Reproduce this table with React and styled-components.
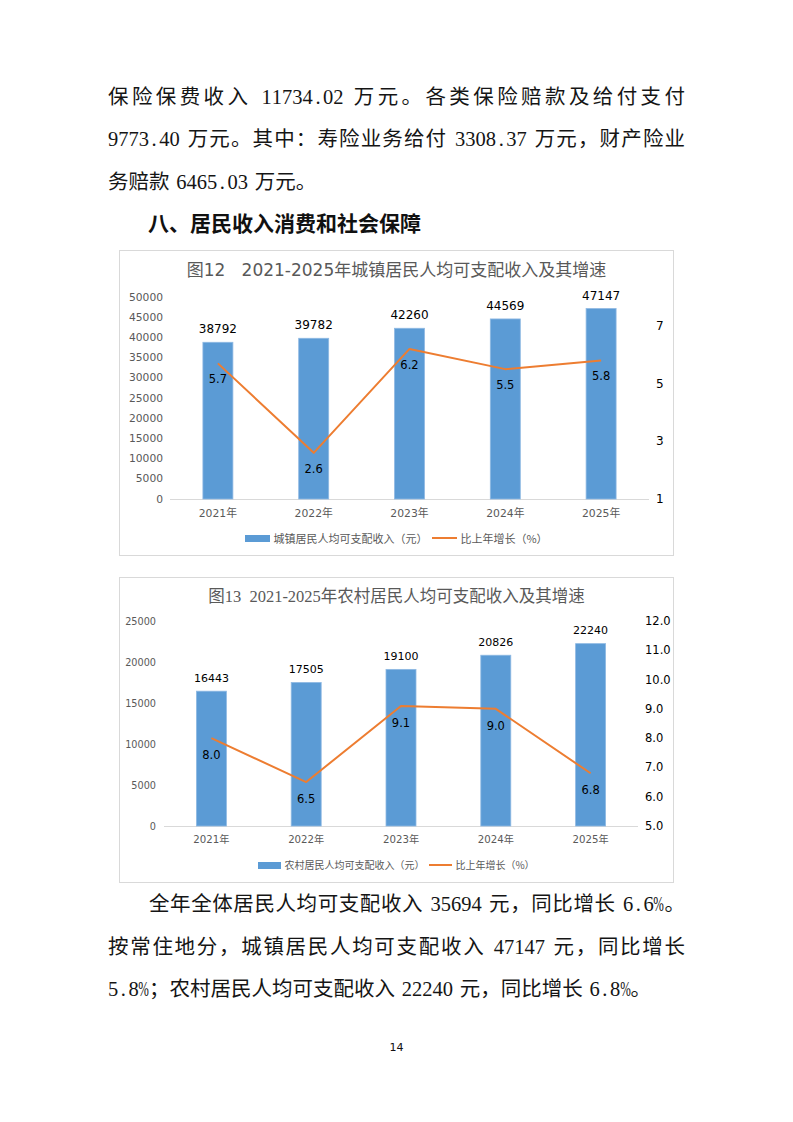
import React from "react";
import styled, { createGlobalStyle } from "styled-components";

const GlobalStyle = createGlobalStyle`
  html, body {
    margin: 0;
    padding: 0;
    background: #fff;
  }
  body {
    font-family: "Liberation Serif", "Noto Sans CJK SC", serif;
    color: #000;
  }
`;

const Page = styled.div`
  width: 793px;
  height: 1122px;
  box-sizing: border-box;
  padding: 75.5px 108px 0;
  overflow: hidden;
`;

const Paragraph = styled.div`
  font-family: "Liberation Serif", "Noto Sans CJK SC", serif;
  font-size: 20.5px;
  line-height: 42.67px;
  word-spacing: 0.08em;
  color: #151515;
`;

const Line = styled.div`
  text-align: ${({ $justify }) => ($justify ? "justify" : "left")};
  text-align-last: ${({ $justify }) => ($justify ? "justify" : "left")};
  text-indent: ${({ $indent }) => ($indent ? "2em" : "0")};
`;

// half-width cell, like the digits of a 仿宋 face
const Half = styled.span`
  display: inline-flex;
  justify-content: center;
  width: 0.5em;
  text-indent: 0;
`;

const Squeeze = styled.span`
  display: inline-block;
  transform: scaleX(0.62);
`;

const Heading = styled.h2`
  margin: 0;
  font-family: "Noto Sans CJK SC", sans-serif;
  font-weight: 700;
  font-size: 21px;
  line-height: 36px;
  text-indent: 40px;
  color: #111;
`;

const ChartBox = styled.div`
  margin: ${({ $gap }) => $gap}px 0 0 11px;
  width: 555px;
  height: 306px;
  box-sizing: border-box;
  border: 1px solid #d9d9d9;
  display: flex;
  flex-direction: column;
`;

const ChartTitle = styled.div`
  height: 34px;
  box-sizing: border-box;
  padding-top: 4px;
  line-height: 30px;
  text-align: center;
  white-space: pre;
  font-size: ${({ $serif }) => ($serif ? 16.5 : 17)}px;
  color: #595959;
  font-family: ${({ $serif }) =>
    $serif
      ? '"Liberation Serif", "Noto Sans CJK SC", serif'
      : '"DejaVu Sans", "Noto Sans CJK SC", sans-serif'};
`;

const PlotSvg = styled.svg`
  display: block;
  width: 553px;
  height: 240px;
  font-family: "DejaVu Sans", "Noto Sans CJK SC", sans-serif;
`;

const Legend = styled.div`
  height: 30px;
  display: flex;
  justify-content: center;
  align-items: flex-start;
  gap: 5px;
  line-height: 26px;
  font-family: "Noto Sans CJK SC", sans-serif;
  font-size: ${({ $size }) => $size}px;
  color: #595959;
`;

const LegendItem = styled.span`
  display: inline-flex;
  align-items: center;
  gap: 3px;
`;

const Swatch = styled.span`
  display: inline-block;
  width: ${({ $w }) => $w}px;
  height: ${({ $line }) => ($line ? 2 : 7)}px;
  background: ${({ $color }) => $color};
`;

const PageNumber = styled.div`
  margin-top: 30px;
  text-align: center;
  font-family: "DejaVu Sans", sans-serif;
  font-size: 11px;
  line-height: 14px;
  color: #111;
`;

const BLUE = "#5b9bd5";
const ORANGE = "#ed7d31";

const urban = {
  title: "图12   2021-2025年城镇居民人均可支配收入及其增速",
  serifTitle: false,
  legendName: "城镇居民人均可支配收入（元）",
  legendSize: 11,
  swatchW: 25,
  data: [
    { year: 2021, value: 38792, pct: 5.7 },
    { year: 2022, value: 39782, pct: 2.6 },
    { year: 2023, value: 42260, pct: 6.2 },
    { year: 2024, value: 44569, pct: 5.5 },
    { year: 2025, value: 47147, pct: 5.8 },
  ],
  left: { max: 50000, step: 5000, x: 43, size: 10.7 },
  right: { min: 1, max: 8, ticks: [1, 3, 5, 7], x: 536, size: 12, digits: 0 },
  axisX0: 50,
  axisX1: 529,
  top: 12,
  base: 214,
  yearY: 228,
  yearSize: 10.8,
  valueSize: 12,
  pctSize: 11.5,
  pctOffset: 16,
};

const rural = {
  title: "图13  2021-2025年农村居民人均可支配收入及其增速",
  serifTitle: true,
  legendName: "农村居民人均可支配收入（元）",
  legendSize: 10,
  swatchW: 23,
  data: [
    { year: 2021, value: 16443, pct: 8.0 },
    { year: 2022, value: 17505, pct: 6.5 },
    { year: 2023, value: 19100, pct: 9.1 },
    { year: 2024, value: 20826, pct: 9.0 },
    { year: 2025, value: 22240, pct: 6.8 },
  ],
  left: { max: 25000, step: 5000, x: 36, size: 9.7 },
  right: { min: 5, max: 12, ticks: [5, 6, 7, 8, 9, 10, 11, 12], x: 525, size: 11.5, digits: 1 },
  axisX0: 44,
  axisX1: 518,
  top: 9,
  base: 214,
  yearY: 227,
  yearSize: 10.2,
  valueSize: 11,
  pctSize: 11.5,
  pctOffset: 17,
};

const Plot = ({ cfg }) => {
  const { data, left, right, axisX0, axisX1, top, base } = cfg;
  const slot = (axisX1 - axisX0) / data.length;
  const cx = (i) => axisX0 + slot * (i + 0.5);
  const yL = (v) => base - (v / left.max) * (base - top);
  const yR = (v) => base - ((v - right.min) / (right.max - right.min)) * (base - top);

  const leftTicks = [];
  for (let v = 0; v <= left.max; v += left.step) leftTicks.push(v);

  const points = data.map((d, i) => `${cx(i)},${yR(d.pct)}`).join(" ");

  return (
    <PlotSvg viewBox="0 0 553 240">
      {leftTicks.map((v) => (
        <text key={v} x={left.x} y={yL(v)} fontSize={left.size} fill="#595959" textAnchor="end" dominantBaseline="central">
          {v}
        </text>
      ))}
      {right.ticks.map((v) => (
        <text key={v} x={right.x} y={yR(v)} fontSize={right.size} fill="#000" dominantBaseline="central">
          {v.toFixed(right.digits)}
        </text>
      ))}
      <line x1={axisX0} x2={axisX1} y1={base + 0.5} y2={base + 0.5} stroke="#d9d9d9" strokeWidth="1" />
      {data.map((d, i) => (
        <g key={d.year}>
          <rect x={cx(i) - 15} y={yL(d.value)} width="30" height={base - yL(d.value)} fill={BLUE} stroke="#8fb9e3" strokeWidth="0.8" />
          <text x={cx(i)} y={yL(d.value) - 13} fontSize={cfg.valueSize} fill="#000" textAnchor="middle" dominantBaseline="central">
            {d.value}
          </text>
          <text x={cx(i)} y={cfg.yearY} fontSize={cfg.yearSize} fill="#595959" textAnchor="middle" dominantBaseline="central">
            {d.year}年
          </text>
        </g>
      ))}
      <polyline points={points} fill="none" stroke={ORANGE} strokeWidth="2" strokeLinejoin="round" />
      {data.map((d, i) => (
        <text key={d.year} x={cx(i)} y={yR(d.pct) + cfg.pctOffset} fontSize={cfg.pctSize} fill="#000" textAnchor="middle" dominantBaseline="central">
          {d.pct.toFixed(1)}
        </text>
      ))}
    </PlotSvg>
  );
};

const Chart = ({ cfg, gap }) => (
  <ChartBox $gap={gap}>
    <ChartTitle $serif={cfg.serifTitle}>{cfg.title}</ChartTitle>
    <Plot cfg={cfg} />
    <Legend $size={cfg.legendSize}>
      <LegendItem>
        <Swatch $w={cfg.swatchW} $color={BLUE} />
        {cfg.legendName}
      </LegendItem>
      <LegendItem>
        <Swatch $w={cfg.swatchW} $color={ORANGE} $line />
        比上年增长（%）
      </LegendItem>
    </Legend>
  </ChartBox>
);

// digits, points and percent signs take half a square, as in the printed text
const renderRich = (text) => {
  const out = [];
  let buf = "";
  [...text].forEach((ch, i) => {
    if (/[0-9.%]/.test(ch)) {
      if (buf) out.push(buf);
      buf = "";
      out.push(<Half key={i}>{ch === "%" ? <Squeeze>%</Squeeze> : ch}</Half>);
    } else {
      buf += ch;
    }
  });
  if (buf) out.push(buf);
  return out;
};

const insuranceLines = [
  "保险保费收入 11734.02 万元。各类保险赔款及给付支付",
  "9773.40 万元。其中：寿险业务给付 3308.37 万元，财产险业",
  "务赔款 6465.03 万元。",
];

const incomeLines = [
  "全年全体居民人均可支配收入 35694 元，同比增长 6.6%。",
  "按常住地分，城镇居民人均可支配收入 47147 元，同比增长",
  "5.8%；农村居民人均可支配收入 22240 元，同比增长 6.8%。",
];

const TextBlock = ({ lines, indentFirst }) => (
  <Paragraph>
    {lines.map((text, i) => (
      <Line key={i} $justify={i < lines.length - 1} $indent={indentFirst && i === 0}>
        {renderRich(text)}
      </Line>
    ))}
  </Paragraph>
);

export default function App() {
  return (
    <>
      <GlobalStyle />
      <Page>
        <TextBlock lines={insuranceLines} />
        <Heading>八、居民收入消费和社会保障</Heading>
        <Chart cfg={urban} gap={10.5} />
        <Chart cfg={rural} gap={21} />
        <TextBlock lines={incomeLines} indentFirst />
        <PageNumber>14</PageNumber>
      </Page>
    </>
  );
}
